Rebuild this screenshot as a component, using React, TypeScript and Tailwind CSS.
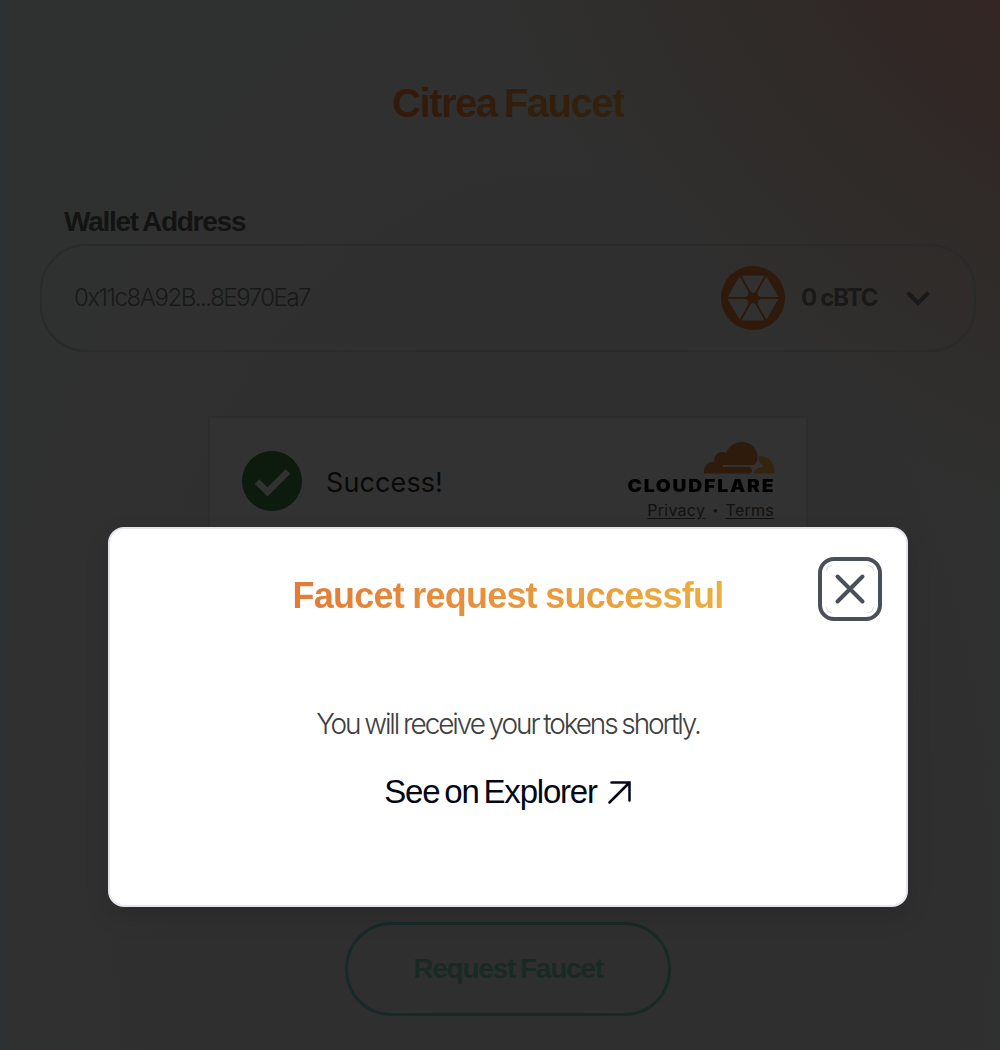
import React from "react";

function CitrusIcon() {
  return (
    <svg viewBox="0 0 64 64" className="h-16 w-16 shrink-0">
      <circle cx="32" cy="32" r="32" fill="#2f190b" />
      <path d="M19 9.5H45L58 32L45 54.5H19L6 32Z" fill="#313131" />
      <path d="M19 9L45 55M45 9L19 55M6 32H58" stroke="#2f190b" strokeWidth="2" />
      <path d="M28 25.5L32 27.5L36 25.5L36.5 30L41 32L36.5 34L36 38.5L32 36.5L28 38.5L27.5 34L23 32L27.5 30Z" fill="#2f190b" stroke="#2f190b" strokeWidth="1" strokeLinejoin="round" />
    </svg>
  );
}

function CloudLogo() {
  return (
    <svg viewBox="0 0 70 32" className="mr-px h-8 w-[70px]">
      <path d="M0 31.5C-.8 24 4 19.4 10.2 19.4C9.5 12.5 16 7.5 21.8 11.2C25 4 31 0 38 0C48 0 54 7.5 53.5 16.5C53 20.5 51 23 47.5 23H19.5C18.5 23 18.5 25 19.5 25H45C48.5 25 48.8 29.5 46.5 31.5Z" fill="#2f1b0c" />
      <path d="M54.5 14C63.5 13.7 70 19.5 70 28V31.5H50C50.2 28.2 53.5 25.5 58 25.3C59.5 25 59.5 23.5 58 22.7C55.5 21 54 18 54.5 14Z" fill="#33240f" />
    </svg>
  );
}

function FaucetPage() {
  return (
    <main className="flex h-[1050px] flex-col items-center overflow-hidden border-l-8 border-[#2d3132] bg-[#2f3030] bg-[radial-gradient(circle_at_1300px_-300px,#332624_0px,#332624_450px,#302927_570px,#2f2c2a_680px,#2f2e2d_770px,transparent_860px),radial-gradient(ellipse_at_55%_85%,#2f2f2f_0%,#2f2f2f_45%,#2f3130_80%)] pl-2">
      <h1 className="mt-[73px] h-[60px] bg-gradient-to-r from-[#33190b] to-[#31220e] bg-clip-text text-[40px] leading-[60px] font-bold tracking-[-1.45px] whitespace-nowrap text-transparent [word-spacing:-2.5px]">
        Citrea Faucet
      </h1>
      <section className="mt-[71px] w-[936px]">
        <label className="block h-10 pl-6 text-[28px] leading-[35px] font-bold tracking-[-1.25px] whitespace-nowrap text-[#131313] [word-spacing:-1.5px]">
          Wallet Address
        </label>
        <div className="flex h-[108px] items-center rounded-[46px] border-2 border-[#292a2a] pr-[44px] pl-8">
          <span className="flex-1 font-['Inter'] text-2xl font-light tracking-[-1.47px] whitespace-nowrap text-[#181919]">
            0x11c8A92B...8E970Ea7
          </span>
          <CitrusIcon />
          <span className="ml-4 w-[78px] font-['Inter'] text-2xl leading-[30px] font-bold tracking-[-1.1px] whitespace-nowrap text-[#191919] [word-spacing:-0.5px]">0 cBTC</span>
          <svg viewBox="0 0 24 16" className="ml-[27px] h-4 w-6" fill="none">
            <path d="M1.5 2.5L12 13L22.5 2.5" stroke="#191919" strokeWidth="4" />
          </svg>
        </div>
      </section>
      <section className="mt-16 flex h-[130px] w-[600px] shrink-0 border-2 border-[#2d2d2d] bg-[#323232] pr-[31px] pl-8">
        <svg viewBox="0 0 60 60" className="mt-[33px] h-[60px] w-[60px]">
          <circle cx="30" cy="30" r="30" fill="#0c1b0d" />
          <path d="M15 30.5L25.5 41L46 20.5" fill="none" stroke="#323232" strokeWidth="6.5" />
        </svg>
        <span className="mt-[45px] ml-6 flex-1 font-['Inter'] text-[27px] leading-10 tracking-[0.1px] text-[#090909]">Success!</span>
        <div className="mt-6 flex flex-col items-end">
          <CloudLogo />
          <span className="mt-1 h-4 origin-right scale-x-[1.135] font-['Inter'] text-[17px] leading-4 font-black tracking-[1.6px] text-black">CLOUDFLARE</span>
          <div className="mt-1.5 mr-px flex items-center gap-[7px] font-['Inter'] text-base leading-5 tracking-[0.25px] text-[#111]">
            <span className="underline underline-offset-2">Privacy</span>
            <span className="text-[11px]">•</span>
            <span className="underline underline-offset-2">Terms</span>
          </div>
        </div>
      </section>
      <button className="mt-[376px] h-[94px] w-[326px] shrink-0 rounded-[46px] bg-gradient-to-r from-[#162a2a] via-[#182923] to-[#192a23] p-[3px]">
        <span className="flex h-full items-center justify-center rounded-[43px] bg-[#2f2f2f] text-[28px] font-bold tracking-[-1.25px] whitespace-nowrap text-[#182a23] [word-spacing:-1.5px]">
          Request Faucet
        </span>
      </button>
    </main>
  );
}

function SuccessDialog() {
  return (
    <div className="absolute top-[527px] left-[108px] flex h-[380px] w-[800px] flex-col items-center rounded-2xl border-2 border-[#e2e5ee] bg-white shadow-[0_10px_24px_rgba(0,0,0,0.12)]">
      <h2 className="mt-10 h-[54px] bg-gradient-to-r from-[#e27b38] to-[#ecae3f] bg-clip-text text-4xl leading-[54px] font-bold tracking-[-0.8px] whitespace-nowrap text-transparent [word-spacing:-0.7px]">
        Faucet request successful
      </h2>
      <p className="mt-[81px] font-['Inter'] text-[28px] leading-10 font-light tracking-[-2.1px] whitespace-nowrap text-[#404040] [word-spacing:-1px]">
        You will receive your tokens shortly.
      </p>
      <a className="mt-[24px] flex h-12 items-center gap-[11px] text-[33px] leading-[48px] tracking-[-1.2px] whitespace-nowrap text-[#020617] [word-spacing:-3px]">
        See on Explorer
        <svg viewBox="0 0 24 24" className="h-6 w-6" fill="none" stroke="#020617" strokeWidth="2.5">
          <path d="M1.5 22.5L21.5 2.5M3.5 2.5H21.5V20.5" strokeLinecap="round" />
        </svg>
      </a>
      <button className="absolute top-7 right-6 flex h-16 w-16 items-center justify-center rounded-2xl border-4 border-[#4b4f59]">
        <svg viewBox="0 0 48 48" className="h-12 w-12" fill="none">
          <path d="M0 6Q1 1 6 0M42 0Q47 1 48 6M48 42Q47 47 42 48M6 48Q1 47 0 42" stroke="#d2d4d8" />
          <path d="M11.5 11.5L36.5 36.5M36.5 11.5L11.5 36.5" stroke="#4b4f59" strokeWidth="4" strokeLinecap="round" />
        </svg>
      </button>
    </div>
  );
}

export default function App() {
  return (
    <div className="relative h-[1050px] overflow-hidden font-['Liberation_Sans',sans-serif]">
      <FaucetPage />
      <SuccessDialog />
    </div>
  );
}
